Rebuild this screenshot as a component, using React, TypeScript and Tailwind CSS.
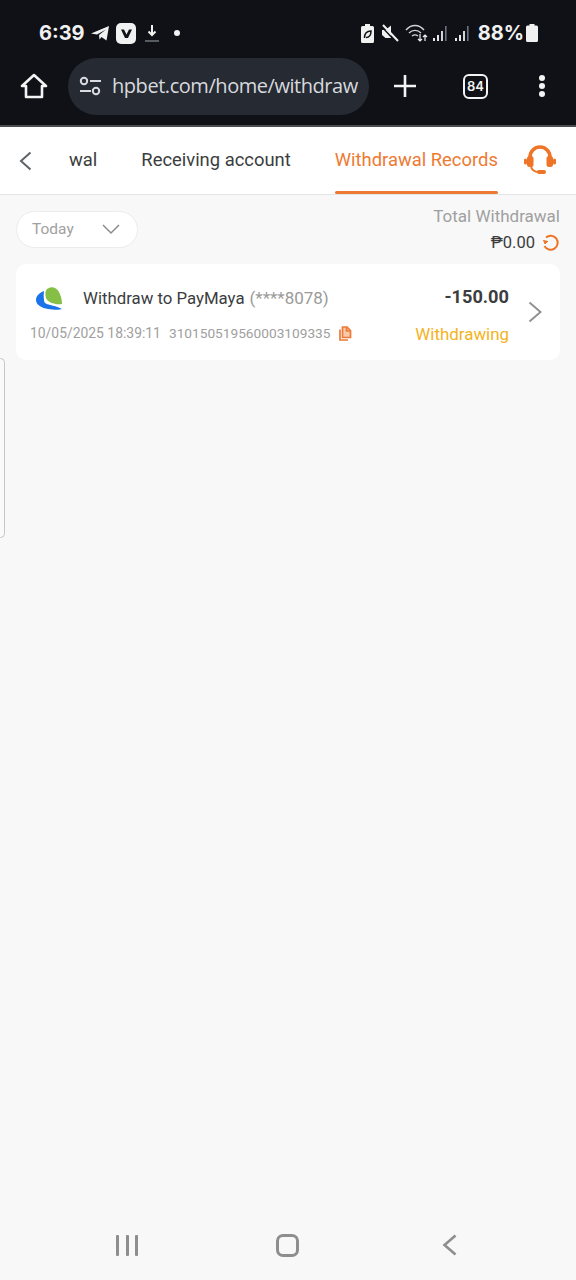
import React from "react";

function Signal() {
  return (
    <svg width="16" height="17" viewBox="0 0 16 17">
      <rect x="1" y="13" width="2" height="3" fill="#e5e7eb" />
      <rect x="5" y="10" width="2" height="6" fill="#e5e7eb" />
      <rect x="9" y="6" width="2" height="10" fill="#d1d5db" />
      <rect x="13" y="1" width="1.6" height="15" fill="#6b7280" />
    </svg>
  );
}

export default function App() {
  return (
    <div className="relative w-[576px] h-[1280px] flex flex-col overflow-hidden bg-[#f8f8f8] font-['Roboto',sans-serif]">
      {/* Status bar */}
      <div className="h-[57px] bg-[#0f1116] flex items-end pb-[12px] pl-[39px] pr-[38px] justify-between text-[#f1f1f1]">
        <div className="flex items-center">
          <span className="font-['Inter',sans-serif] font-bold text-[20px] leading-[24px] w-[52px]">6:39</span>
          <svg width="20" height="18" viewBox="0 0 20 18" className="-ml-[1px]">
            <path d="M1 9.500 19 2l-2.500 14.500-5-3.500-2 2.500-.5-4.500 7-5.500-9 5z" fill="#f1f1f1" />
          </svg>
          <div className="ml-[6px] w-[20px] h-[21px] rounded-[5px] bg-[#f1f1f1] flex items-center justify-center">
            <svg width="13" height="11" viewBox="0 0 13 11">
              <path d="M1 1.500h3l2.500 5 2.500-5h3L8 10H5z" fill="#111318" />
            </svg>
          </div>
          <svg width="16" height="20" viewBox="0 0 16 20" className="ml-[8px]">
            <path d="M8 2v10M4.500 8.500 8 12l3.500-3.500" stroke="#f1f1f1" strokeWidth="2" fill="none" />
            <path d="M1 18h14" stroke="#71757d" strokeWidth="1.500" />
          </svg>
          <div className="ml-[14px] w-[6px] h-[6px] rounded-full bg-[#f1f1f1]" />
        </div>
        <div className="flex items-center">
          <svg width="13" height="19" viewBox="0 0 13 19">
            <path d="M4 0h5v2h2.500A1.500 1.500 0 0 1 13 3.500v14a1.500 1.500 0 0 1-1.500 1.500h-10A1.500 1.500 0 0 1 0 17.500v-14A1.500 1.500 0 0 1 1.500 2H4z" fill="#f1f1f1" />
            <path d="M3.500 14C3.500 9 6 7 10 7c0 4-2 6.500-5 6.500" fill="none" stroke="#111318" strokeWidth="1.500" />
          </svg>
          <svg width="20" height="20" viewBox="0 0 20 20" className="ml-[7px]">
            <path d="M1 7h3.500L10 2.500V15H4.500L1 12z" fill="#f1f1f1" />
            <path d="M0.500 3.500l15 16" stroke="#0f1116" strokeWidth="1.500" />
            <path d="M2 2l15 16" stroke="#f1f1f1" strokeWidth="2" />
          </svg>
          <svg width="24" height="20" viewBox="0 0 24 20" className="ml-[4px]">
            <path d="M1 7c5-6 13-6 18 0M4 10c3.500-3.500 8.500-3.500 12 0M7 13c2-1.500 4-1.500 6 0" fill="none" stroke="#d1d5db" strokeWidth="1.400" />
            <path d="M15 11v7M13 16l2 2 2-2M20 18v-6M18 14l2-2 2 2" fill="none" stroke="#f1f1f1" strokeWidth="1.200" />
          </svg>
          <div className="ml-[3px]"><Signal /></div>
          <div className="ml-[6px]"><Signal /></div>
          <span className="ml-[8px] font-['Inter',sans-serif] font-bold text-[20px] leading-[24px]">88%</span>
          <svg width="12" height="18" viewBox="0 0 12 18" className="ml-[2px]">
            <path d="M3.500 0h5v1.500h2A1.500 1.500 0 0 1 12 3v13.500a1.500 1.500 0 0 1-1.500 1.500h-9A1.500 1.500 0 0 1 0 16.500V3a1.500 1.500 0 0 1 1.500-1.500h2z" fill="#f1f1f1" />
          </svg>
        </div>
      </div>

      {/* Browser toolbar */}
      <div className="h-[68px] bg-[#0f1116] flex items-center pb-[10px]">
        <svg width="28" height="26" viewBox="0 0 28 26" className="ml-[20px]" fill="none" stroke="#f4f4f4" strokeWidth="2.600" strokeLinejoin="round">
          <path d="M2 13 14 2l12 11h-4v11H6V13z" />
        </svg>
        <div className="ml-[20px] w-[301px] h-[57px] rounded-full bg-[#262a33] flex items-center pl-[11px]">
          <svg width="23" height="20" viewBox="0 0 23 20" fill="none" stroke="#d9dbe0" strokeWidth="2">
            <circle cx="5" cy="5" r="3.200" />
            <path d="M11 5h11M1 15h11" />
            <circle cx="17" cy="15" r="3.200" />
          </svg>
          <span className="ml-[10px] whitespace-nowrap text-[20px] leading-[28px] text-[#d7d9de] font-['Open_Sans',sans-serif] tracking-[-0.45px]">hpbet.com/home/withdraw</span>
        </div>
        <svg width="24" height="24" viewBox="0 0 24 24" className="ml-[24px]" stroke="#f4f4f4" strokeWidth="2.600">
          <path d="M12 1v22M1 12h22" />
        </svg>
        <div className="ml-[46px] w-[25px] h-[25px] rounded-[6px] border-[2.500px] border-[#f4f4f4] flex items-center justify-center text-[#f4f4f4] text-[13px] font-semibold leading-none font-['Inter',sans-serif]">84</div>
        <div className="ml-[51px] flex flex-col gap-[2px]">
          <div className="w-[6px] h-[6px] rounded-full bg-[#f4f4f4]" />
          <div className="w-[6px] h-[6px] rounded-full bg-[#f4f4f4]" />
          <div className="w-[6px] h-[6px] rounded-full bg-[#f4f4f4]" />
        </div>
      </div>
      <div className="h-[2px] bg-[#4a4c50]" />

      {/* Tabs header */}
      <div className="h-[68px] bg-white border-b border-[#e4e4e4] flex items-stretch">
        <div className="flex items-center pl-[19px]">
          <svg width="13" height="20" viewBox="0 0 13 20" fill="none" stroke="#5f6266" strokeWidth="2">
            <path d="M11.500 1.500 2 10l9.500 8.500" />
          </svg>
        </div>
        <div className="ml-[37px] flex items-center text-[18.400px] text-[#3b3d40] pb-[1px]">wal</div>
        <div className="ml-[44px] flex items-center text-[18.400px] text-[#3b3d40] pb-[1px]">Receiving account</div>
        <div className="ml-[44px] relative flex items-center text-[18.400px] text-[#ed7a33] pb-[1px]">
          Withdrawal Records
          <div className="absolute left-0 right-0 bottom-0 h-[3px] rounded-full bg-[#ed7a33]" />
        </div>
        <div className="ml-[25px] flex items-center pb-[1px]">
          <svg width="34" height="31" viewBox="0 0 34 31" fill="none">
            <path d="M7 15V12a10 10 0 0 1 20 0v3" stroke="#ee7427" strokeWidth="3.500" />
            <rect x="4" y="11" width="6.500" height="11" rx="2.500" fill="#ee7427" />
            <rect x="23.500" y="11" width="6.500" height="11" rx="2.500" fill="#ee7427" />
            <rect x="1" y="13.500" width="3" height="6" rx="1.500" fill="#ee7427" />
            <rect x="30" y="13.500" width="3" height="6" rx="1.500" fill="#ee7427" />
            <path d="M8 21c.5 4 3.500 6 8 6" stroke="#ee7427" strokeWidth="2" />
            <rect x="14" y="25" width="9" height="4" rx="2" fill="#ee7427" />
          </svg>
        </div>
      </div>

      {/* Filter row */}
      <div className="flex justify-between pl-[16px] pr-[16px] h-[69px]">
        <div className="mt-[16px] w-[122px] h-[37px] rounded-full bg-white border border-[#ececec] flex items-center pl-[15px]">
          <span className="text-[15.500px] text-[#a0a0a0] w-[54px]">Today</span>
          <svg width="18" height="11" viewBox="0 0 18 11" fill="none" stroke="#8a8c8f" strokeWidth="1.500" className="ml-[16px]">
            <path d="M1 1l8 8 8-8" />
          </svg>
        </div>
        <div className="flex flex-col items-end pt-[9px]">
          <span className="text-[17px] leading-[24px] text-[#a0a0a0]">Total Withdrawal</span>
          <div className="mt-[3px] flex items-center">
            <span className="text-[16.500px] leading-[24px] text-[#3b3d40]">₱0.00</span>
            <svg width="18" height="18" viewBox="0 0 18 18" fill="none" stroke="#ee7427" strokeWidth="2" className="ml-[7px]">
              <path d="M4 3.500A7 7 0 1 1 2.500 12" />
              <path d="M1.500 6 3 10l3-3" fill="#ee7427" strokeWidth="1" />
            </svg>
          </div>
        </div>
      </div>

      {/* Record card */}
      <div className="mx-[16px] h-[96px] rounded-[10px] bg-white flex items-stretch">
        <div className="flex-1 min-w-0 pl-[15px]">
          <div className="flex items-center h-[25px] mt-[22px]">
            <svg width="28" height="24" viewBox="0 0 28 24" className="ml-[5px] mr-[19px]">
              <path d="M8 4C3 6 0 9 0 13c0 5 6 8 12 9 6 1 12 1 14 0-6-3-8-3-12-4-4-1-6-2-6-5-.5-3-.5-6 0-9z" fill="#1a73e8" />
              <path d="M11 2c3-2 6-2 8-1 4 2 7 9 7 16-6 1-14-1-16-6-1-4-1-7 1-9z" fill="#86bf45" />
            </svg>
            <span className="text-[16.800px] text-[#3b3d40] whitespace-nowrap">Withdraw to PayMaya</span>
            <span className="ml-[5px] text-[17px] text-[#9a9a9a] whitespace-nowrap">(****8078)</span>
          </div>
          <div className="flex items-center mt-[13px] text-[13.900px] leading-[18px] text-[#a0a0a0] whitespace-nowrap -ml-[1px]">
            <span>10/05/2025 18:39:11</span>
            <span className="ml-[8px] text-[13.700px]">310150519560003109335</span>
            <svg width="13" height="15" viewBox="0 0 13 15" fill="none" stroke="#ec7a36" strokeWidth="1.700" className="ml-[9px]">
              <path d="M1 3.500v10.500h8" />
              <path d="M3.500 1h4.500l3.500 3.500V11.500h-8z" fill="#f9c9ac" />
              <path d="M7.500 1v4h4" />
            </svg>
          </div>
        </div>
        <div className="flex flex-col items-end pt-[21px]">
          <span className="text-[18.200px] leading-[24px] font-bold text-[#3b3d40]">-150.00</span>
          <span className="mt-[13px] text-[16.900px] leading-[24px] text-[#f4b321]">Withdrawing</span>
        </div>
        <div className="w-[51px] flex items-center pl-[19px]">
          <svg width="14" height="22" viewBox="0 0 14 22" fill="none" stroke="#909193" strokeWidth="2">
            <path d="M1.500 1.500 12.500 11 1.500 20.500" />
          </svg>
        </div>
      </div>

      <div className="flex-1" />

      {/* Android nav bar */}
      <div className="h-[70px] flex items-start pt-[24px] relative">
        <div className="ml-[116px] mt-[1px] flex gap-[6.500px]">
          <div className="w-[3px] h-[21px] bg-[#8e8e8e] rounded-[1px]" />
          <div className="w-[3px] h-[21px] bg-[#8e8e8e] rounded-[1px]" />
          <div className="w-[3px] h-[21px] bg-[#8e8e8e] rounded-[1px]" />
        </div>
        <div className="ml-[138px] w-[23px] h-[23px] rounded-[7px] border-[3px] border-[#8e8e8e]" />
        <svg width="15" height="22" viewBox="0 0 15 22" fill="none" stroke="#8e8e8e" strokeWidth="2.600" className="ml-[143px]">
          <path d="M13.500 1.500 2.500 11l11 9.500" />
        </svg>
      </div>

      {/* Edge handle */}
      <div className="absolute left-[-4px] top-[358px] w-[9px] h-[180px] rounded-[5px] border border-[#c6c6c6] bg-[#fafafa]" />
    </div>
  );
}
